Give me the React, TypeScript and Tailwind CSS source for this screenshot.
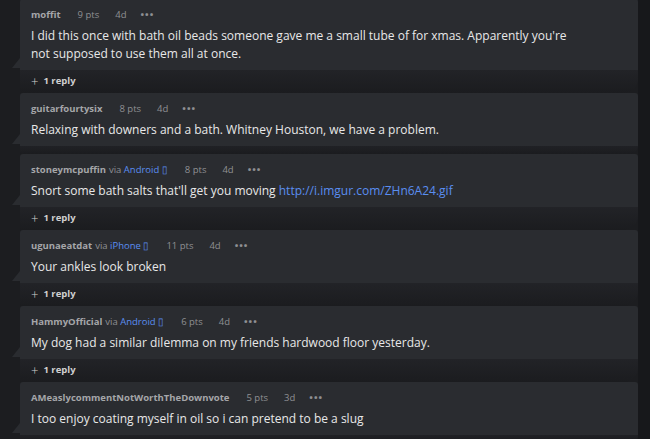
import React from 'react';

type Comment = {
    user: string;
    via?: string;
    pts: string;
    age: string;
    body: React.ReactNode;
    replies?: number;
};

const comments: Comment[] = [
    {
        user: 'moffit',
        pts: '9 pts',
        age: '4d',
        body: "I did this once with bath oil beads someone gave me a small tube of for xmas. Apparently you're not supposed to use them all at once.",
        replies: 1,
    },
    {
        user: 'guitarfourtysix',
        pts: '8 pts',
        age: '4d',
        body: 'Relaxing with downers and a bath. Whitney Houston, we have a problem.',
    },
    {
        user: 'stoneymcpuffin',
        via: 'Android',
        pts: '8 pts',
        age: '4d',
        body: (
            <>
                Snort some bath salts that'll get you moving{' '}
                <span className="text-[#5a8ef0]">http://i.imgur.com/ZHn6A24.gif</span>
            </>
        ),
        replies: 1,
    },
    {
        user: 'ugunaeatdat',
        via: 'iPhone',
        pts: '11 pts',
        age: '4d',
        body: 'Your ankles look broken',
        replies: 1,
    },
    {
        user: 'HammyOfficial',
        via: 'Android',
        pts: '6 pts',
        age: '4d',
        body: 'My dog had a similar dilemma on my friends hardwood floor yesterday.',
        replies: 1,
    },
    {
        user: 'AMeaslycommentNotWorthTheDownvote',
        pts: '5 pts',
        age: '3d',
        body: 'I too enjoy coating myself in oil so i can pretend to be a slug',
    },
];

const CommentCard: React.FC<{ c: Comment }> = ({ c }) => (
    <div className="flex flex-col">
        <div className="relative bg-[#2a2c30] rounded-t-[3px] pl-[11px] pr-[56px] pt-[9px] pb-[7px]">
            {/* speech tail */}
            <div className="absolute -left-[8px] bottom-[2px] w-0 h-0 border-t-[10px] border-t-transparent border-r-[8px] border-r-[#2a2c30]"></div>
            <div className="flex items-center text-[9.5px] leading-[14px] text-[#8f9093]">
                <span className="font-bold text-[#a5a6a9]">{c.user}</span>
                {c.via && (
                    <span className="ml-[3px]">
                        via <span className="text-[#5a8ef0]">{c.via} ▯</span>
                    </span>
                )}
                <span className="ml-[17px]">{c.pts}</span>
                <span className="ml-[16px]">{c.age}</span>
                <span className="ml-[14px] font-bold tracking-[1px]">•••</span>
            </div>
            <p className="mt-[5px] text-[12px] leading-[18px] text-[#e8e8e8]">{c.body}</p>
        </div>
        {c.replies ? (
            <div className="h-[23px] bg-gradient-to-b from-[#222327] to-[#1b1c1f] rounded-br-[14px] flex items-center pl-[11px] text-[9.5px] text-[#cfcfcf]">
                <span className="text-[13px] font-light mr-[5px] leading-none">+</span>
                <span className="font-bold">{c.replies} reply</span>
            </div>
        ) : (
            <div className="h-[8px] bg-gradient-to-b from-[#202125] to-[#1b1c1f] rounded-br-[8px]"></div>
        )}
    </div>
);

export default function App() {
    return (
        <div
            className="w-[650px] h-[439px] overflow-hidden bg-[#1c1d20] flex"
            style={{ fontFamily: '"Open Sans", "Noto Sans", sans-serif' }}
        >
            <div className="w-[20px] shrink-0"></div>
            <div className="w-[618px] shrink-0 flex flex-col -mt-[1px]">
                {comments.map((c, i) => (
                    <CommentCard key={i} c={c} />
                ))}
            </div>
            <div className="flex-1 bg-[#17181b]"></div>
        </div>
    );
}
